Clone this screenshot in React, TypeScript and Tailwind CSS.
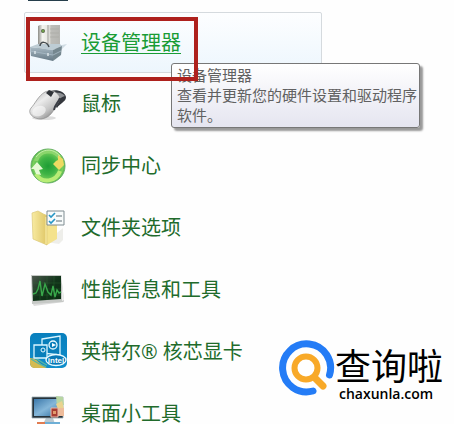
import type { ReactNode } from "react";

const DeviceIcon = () => (
  <svg viewBox="0 0 40 40" className="h-10 w-10">
    <defs>
      <linearGradient id="tower" x1="0" x2="1">
        <stop offset="0" stopColor="#8c8c88" />
        <stop offset=".2" stopColor="#f4f4ef" />
        <stop offset=".5" stopColor="#e4e4de" />
        <stop offset=".6" stopColor="#bdbdb9" />
        <stop offset="1" stopColor="#b5b5b1" />
      </linearGradient>
      <linearGradient id="case" x2="0" y2="1">
        <stop offset="0" stopColor="#a9bac4" />
        <stop offset="1" stopColor="#667985" />
      </linearGradient>
    </defs>
    <path d="M28 23l10-2-8 8z" fill="#b7c8d2" opacity=".6" />
    <path d="M9 3l2-1h20v24H9z" fill="url(#tower)" />
    <path d="M19 2v20" stroke="#9b9b97" strokeWidth="1" />
    <path d="M21 6h9M21 10h9M21 14h9" stroke="#a9a9a5" strokeWidth=".7" />
    <circle cx="14" cy="8" r="2" fill="#5b6b4c" />
    <circle cx="14" cy="8" r="1" fill="#78b04a" />
    <path d="M1 24l8-3h22l2 2-9 4z" fill="#bdccd4" />
    <path d="M1 24l23 3v11L2 33z" fill="url(#case)" />
    <path d="M24 27l9-4-1 9-8 6z" fill="#75878f" />
    <path d="M1 28l23 4 8-4" fill="none" stroke="#a9bbc6" strokeWidth=".8" />
    <path d="M11 23c0-5 7-5 9 1" fill="none" stroke="#454b4e" strokeWidth="1.5" />
    <path d="M6 28v3M19 30v3" stroke="#dce5e9" strokeWidth="1.5" />
  </svg>
);

const MouseIcon = () => (
  <svg viewBox="0 0 40 40" className="h-10 w-10">
    <defs>
      <linearGradient id="mouse" x1="0" y1="0" x2=".8" y2="1">
        <stop offset="0" stopColor="#a9a9a9" />
        <stop offset=".4" stopColor="#ececec" />
        <stop offset=".7" stopColor="#c4c4c4" />
        <stop offset="1" stopColor="#777" />
      </linearGradient>
    </defs>
    <ellipse cx="15" cy="34" rx="12" ry="2" fill="#ddd" />
    <path d="M22 7c6-2 14 1 15 6 0 5-6 6-9 11l-4-4z" fill="#34373d" />
    <path d="M27 9c4-1 7 1 9 3-3 1-5 2-7 4z" fill="#8d9094" />
    <path d="M16 8C9 12 6 20 2 24c-4 5 2 11 10 11 8-1 11-6 14-11 2-4 4-6 5-10-1-4-5-7-9-7-2 0-4 0-6 1z" fill="url(#mouse)" stroke="#8a8a8a" strokeWidth=".7" />
    <path d="M17 9l3-3 5 2-3 5z" fill="#303338" />
    <path d="M31 14c-2 5-5 6-6 12" fill="none" stroke="#393c44" strokeWidth="2" />
    <ellipse cx="10" cy="27" rx="7" ry="5" fill="#fff" opacity=".55" transform="rotate(-20 10 27)" />
  </svg>
);

const SyncIcon = () => (
  <svg viewBox="0 0 40 40" className="h-10 w-10">
    <defs>
      <radialGradient id="sync" cx=".5" cy=".5" r=".55">
        <stop offset="0" stopColor="#1e9d35" />
        <stop offset=".45" stopColor="#3fb445" />
        <stop offset=".8" stopColor="#7bd05c" />
        <stop offset="1" stopColor="#319c3c" />
      </radialGradient>
    </defs>
    <circle cx="19" cy="20" r="17" fill="url(#sync)" stroke="#68af66" />
    <path d="M7 15C10 4 25 2 31 12" fill="none" stroke="#8bd56c" strokeWidth="4" />
    <path d="M31 25c-4 11-18 13-24 3" fill="none" stroke="#b8ed76" strokeWidth="4" />
    <path d="M27 15l2-1v-5l5 4 1 6-5 5-6-6z" fill="#edda62" />
    <path d="M2 23l6-7 6 7-4 1 2 5-5-1-2-5z" fill="#e6fad5" />
    <path d="M7 11c7-9 17-9 24-1" fill="none" stroke="#d9f6c1" opacity=".7" />
  </svg>
);

const FolderIcon = () => (
  <svg viewBox="0 0 40 40" className="h-10 w-10">
    <defs>
      <linearGradient id="folder" x1="0" x2="1">
        <stop offset="0" stopColor="#f8eba2" />
        <stop offset="1" stopColor="#dfc666" />
      </linearGradient>
    </defs>
    <path d="M17 34l13 2 4-4V20z" fill="#eeeeea" />
    <path d="M15 6l13 5v20l-10 6z" fill="#f4e28c" />
    <path d="M3 5l6-2 9 5v29L4 31z" fill="url(#folder)" stroke="#dbc978" strokeWidth=".7" />
    <path d="M17 9v27" stroke="#fff5b4" strokeWidth="1" />
    <path d="M18 3h17v14H18z" fill="#f8fbfb" stroke="#7f8c91" />
    <path d="M20 7l2 2 4-4M20 13l2 2 4-4" fill="none" stroke="#2696c5" strokeWidth="1.6" />
    <path d="M27 8h6M27 13h6" stroke="#607078" strokeWidth="1.2" />
  </svg>
);

const PerformanceIcon = () => (
  <svg viewBox="0 0 40 40" className="h-10 w-10">
    <defs>
      <linearGradient id="perf" x1="0" x2="1" y2="1">
        <stop offset="0" stopColor="#4b564c" />
        <stop offset=".5" stopColor="#12341a" />
        <stop offset="1" stopColor="#092d10" />
      </linearGradient>
    </defs>
    <path d="M3 33l32-3v2L5 36z" fill="#ddd" />
    <path d="M2 5h30l3 25-1 2-31 2z" fill="#c5c8c5" />
    <path d="M32 5l3 25-2 1V5z" fill="#eee" />
    <path d="M3 6h29v23L4 31z" fill="url(#perf)" />
    <path d="M4 13h28M4 19h28M4 25h28M11 6v24M18 6v24M25 6v23" stroke="#2f6e37" strokeWidth=".6" opacity=".6" />
    <path d="M4 24l3-1 2-4 2-8 2 15 3-12 3 8 3 3 2-9 2 11 2-7 2 3 2-1" fill="none" stroke="#39a84b" strokeWidth="1.4" />
  </svg>
);

const IntelIcon = () => (
  <svg viewBox="0 0 40 40" className="h-10 w-10">
    <defs>
      <linearGradient id="intel" x2="0" y2="1">
        <stop offset="0" stopColor="#087fbd" />
        <stop offset="1" stopColor="#108ecb" />
      </linearGradient>
    </defs>
    <rect x="1" y="1" width="37" height="35" rx="5" fill="url(#intel)" />
    <path d="M1 26c7 0 10 7 17 10H6q-5 0-5-5z" fill="#d5bb51" />
    <path d="M2 27c6 4 10 6 15 8M4 25c5 2 9 6 14 8" stroke="#57b4a2" strokeWidth="1.5" fill="none" />
    <path d="M13 7l18-3v19l-18-2z" fill="#087eba" stroke="#d9f5ff" strokeWidth="1.3" />
    <path d="M5 13h13v13H5z" fill="#087eba" stroke="#d9f5ff" strokeWidth="1.3" />
    <circle cx="24" cy="13" r="4" fill="none" stroke="#e8faff" strokeWidth="1.3" />
    <path d="M23 11l4 2-4 2z" fill="#fff" />
    <circle cx="14" cy="18" r="2" fill="none" stroke="#e8faff" />
    <ellipse cx="27" cy="28" rx="10" ry="5.5" fill="#0878b5" stroke="#e8faff" strokeWidth="1.3" />
    <text x="27" y="31" textAnchor="middle" fill="#fff" fontFamily="Liberation Sans, sans-serif" fontSize="8" fontWeight="700">intel</text>
  </svg>
);

const DesktopIcon = () => (
  <svg viewBox="0 0 40 40" className="h-10 w-10">
    <defs>
      <linearGradient id="screen" x2="1" y2="1">
        <stop offset="0" stopColor="#3b78aa" />
        <stop offset=".5" stopColor="#85b7d9" />
        <stop offset="1" stopColor="#2c6c9f" />
      </linearGradient>
    </defs>
    <path d="M17 24h7l2 6H14z" fill="#bac8d0" />
    <path d="M3 3h31v21H3z" fill="#26323a" stroke="#9babb3" strokeWidth=".8" />
    <path d="M5 5h27v17H5z" fill="url(#screen)" />
    <path d="M27 2l7 1 1 8-7 1z" fill="#b8d6a2" />
    <path d="M27 10l6-3 2 8-5 3z" fill="#e9d38f" />
    <path d="M29 14h6v8h-6z" fill="#eebc9b" />
    <path d="M22 14h7v9h-7z" fill="#a83e32" stroke="#e5bbae" />
    <path d="M24 17h3v3h-3z" fill="#e29b6d" />
    <path d="M8 28h8v5H8z" fill="#e17c51" />
    <path d="M16 28h15v4H16z" fill="#6eafd6" />
  </svg>
);

const items: { label: string; icon: ReactNode }[] = [
  { label: "鼠标", icon: <MouseIcon /> },
  { label: "同步中心", icon: <SyncIcon /> },
  { label: "文件夹选项", icon: <FolderIcon /> },
  { label: "性能信息和工具", icon: <PerformanceIcon /> },
  { label: "英特尔® 核芯显卡", icon: <IntelIcon /> },
  { label: "桌面小工具", icon: <DesktopIcon /> },
];

export default function App() {
  return (
    <main className="relative h-screen overflow-hidden bg-[#fefefe] font-['Open_Sans','Noto_Sans_CJK_SC',sans-serif]">
      <div className="ml-7 h-px w-10 bg-[#263e4b]" />
      <nav className="pt-[11px] pl-6">
        <div className="relative w-[298px]">
          <a
            href="#device-manager"
            aria-describedby="device-tip"
            className="flex h-[61px] items-center gap-3 rounded-xs border border-[#d5dade] bg-linear-to-b from-[#fdfeff] to-[#edf6fd] pt-px pl-1 text-xl text-[#199c35] underline decoration-1 underline-offset-3"
          >
            <DeviceIcon />
            设备管理器
          </a>
          <div
            id="device-tip"
            role="tooltip"
            className="absolute top-[51px] left-[147px] w-[249px] rounded-[3px] border border-[#777] bg-linear-to-b from-white to-[#e5e5f0] px-[5px] pt-px pb-[2px] text-[15px] leading-5 text-[#616161] shadow-[3px_3px_2px_#999]"
          >
            <p>设备管理器</p>
            <p className="whitespace-nowrap">查看并更新您的硬件设置和驱动程序</p>
            <p>软件。</p>
          </div>
          <div className="pointer-events-none absolute top-[5px] left-[2px] h-16 w-[172px] border-4 border-[#ae211d]" />
        </div>
        {items.map((item) => (
          <a
            key={item.label}
            href={`#${item.label}`}
            className="flex h-[62px] w-fit items-center gap-3 pl-[5px] text-xl text-[#216b2b]"
          >
            {item.icon}
            {item.label}
          </a>
        ))}
      </nav>

      {/* site mark floats over the list */}
      <div className="absolute top-[340px] right-[11px] flex">
        <svg viewBox="0 0 56 56" className="h-14 w-14">
          <path d="M50.5 35A24 24 0 1 0 34 51" fill="none" stroke="#247cf6" strokeWidth="7" strokeLinecap="round" />
          <path d="M35 37l9 9" stroke="#f8a928" strokeWidth="7" strokeLinecap="round" />
          <circle cx="27" cy="28" r="11.5" fill="#fff" stroke="#f8a928" strokeWidth="6" />
        </svg>
        <div className="pt-0.5 text-black">
          <p className="font-['Noto_Sans_CJK_SC',sans-serif] text-4xl leading-11">查询啦</p>
          <p className="pl-1 text-sm leading-4 font-semibold">chaxunla.com</p>
        </div>
      </div>
    </main>
  );
}
